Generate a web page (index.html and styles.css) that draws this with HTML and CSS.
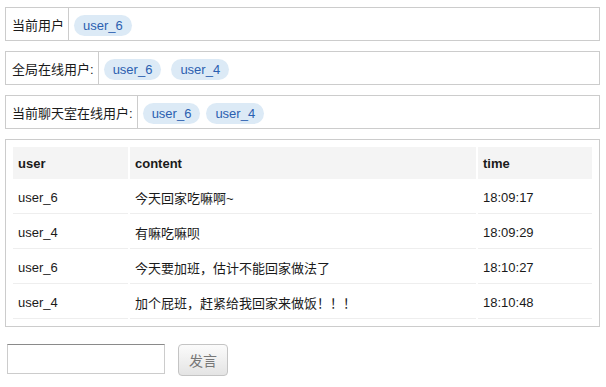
FILE: index.html
```html
<!DOCTYPE html>
<html lang="zh">
<head>
  <meta charset="utf-8"/>
  <title>聊天室</title>
  <link rel="stylesheet" href="styles.css">
</head>
<body>
  <div class="info-bar">
    <div class="info-label">当前用户</div>
    <div class="info-users">
      <span class="badge">user_6</span>
    </div>
  </div>

  <div class="info-bar">
    <div class="info-label">全局在线用户:</div>
    <div class="info-users">
      <span class="badge">user_6</span>
      <span class="badge wide-gap">user_4</span>
    </div>
  </div>

  <div class="info-bar">
    <div class="info-label">当前聊天室在线用户:</div>
    <div class="info-users">
      <span class="badge">user_6</span>
      <span class="badge">user_4</span>
    </div>
  </div>

  <div class="messages">
    <table>
      <thead>
        <tr>
          <th class="col-user">user</th>
          <th>content</th>
          <th class="col-time">time</th>
        </tr>
      </thead>
      <tbody>
        <tr><td>user_6</td><td>今天回家吃嘛啊~</td><td>18:09:17</td></tr>
        <tr><td>user_4</td><td>有嘛吃嘛呗</td><td>18:09:29</td></tr>
        <tr><td>user_6</td><td>今天要加班，估计不能回家做法了</td><td>18:10:27</td></tr>
        <tr><td>user_4</td><td>加个屁班，赶紧给我回家来做饭！！！</td><td>18:10:48</td></tr>
      </tbody>
    </table>
  </div>

  <div class="composer">
    <input type="text" id="msg">
    <button type="button">发言</button>
  </div>
</body>
</html>
```

FILE: styles.css
```css
body {
  font-family: "Liberation Sans", "Noto Sans CJK SC", sans-serif;
  font-size: 13px;
  color: #1a1a1a;
  background: #fff;
  margin: 7px 6px 0 5px;
}

.info-bar {
  display: flex;
  height: 32px;
  border: 1px solid #ccc;
  margin-bottom: 10px;
}

.info-label {
  display: flex;
  align-items: center;
  padding: 0 4px 0 6px;
  border-right: 1px solid #ccc;
}

.info-users {
  display: flex;
  align-items: center;
  padding-left: 5px;
  padding-top: 2px;
}

.badge {
  display: inline-block;
  height: 21px;
  line-height: 21px;
  padding: 0 9px;
  margin-right: 6px;
  border-radius: 11px;
  background: #dceaf6;
  color: #2b5fb0;
}

.badge.wide-gap {
  margin-left: 4px;
}

.messages {
  border: 1px solid #ccc;
  padding: 5px;
}

table {
  width: 100%;
  border-spacing: 2px;
}

th, td {
  text-align: left;
  padding: 0 5px;
}

th {
  height: 32px;
  background: #f4f4f4;
  font-weight: bold;
}

td {
  height: 32px;
  border-bottom: 1px solid #eee;
}

.col-user {
  width: 105px;
}

.col-time {
  width: 104px;
}

.composer {
  display: flex;
  align-items: flex-start;
  margin-top: 17px;
  padding-left: 2px;
}

.composer input {
  width: 158px;
  height: 30px;
  box-sizing: border-box;
  border: 1px solid #ccc;
  border-top-color: #8a8a8a;
  margin: 0;
  padding: 2px 4px;
}

.composer button {
  margin-left: 13px;
  width: 50px;
  height: 32px;
  border: 1px solid #c4c4c4;
  border-radius: 4px;
  background: linear-gradient(#fbfbfb, #e4e4e4);
  color: #777;
  font-family: "Liberation Sans", "Noto Sans CJK SC", sans-serif;
  font-size: 14px;
  padding: 0;
}
```
